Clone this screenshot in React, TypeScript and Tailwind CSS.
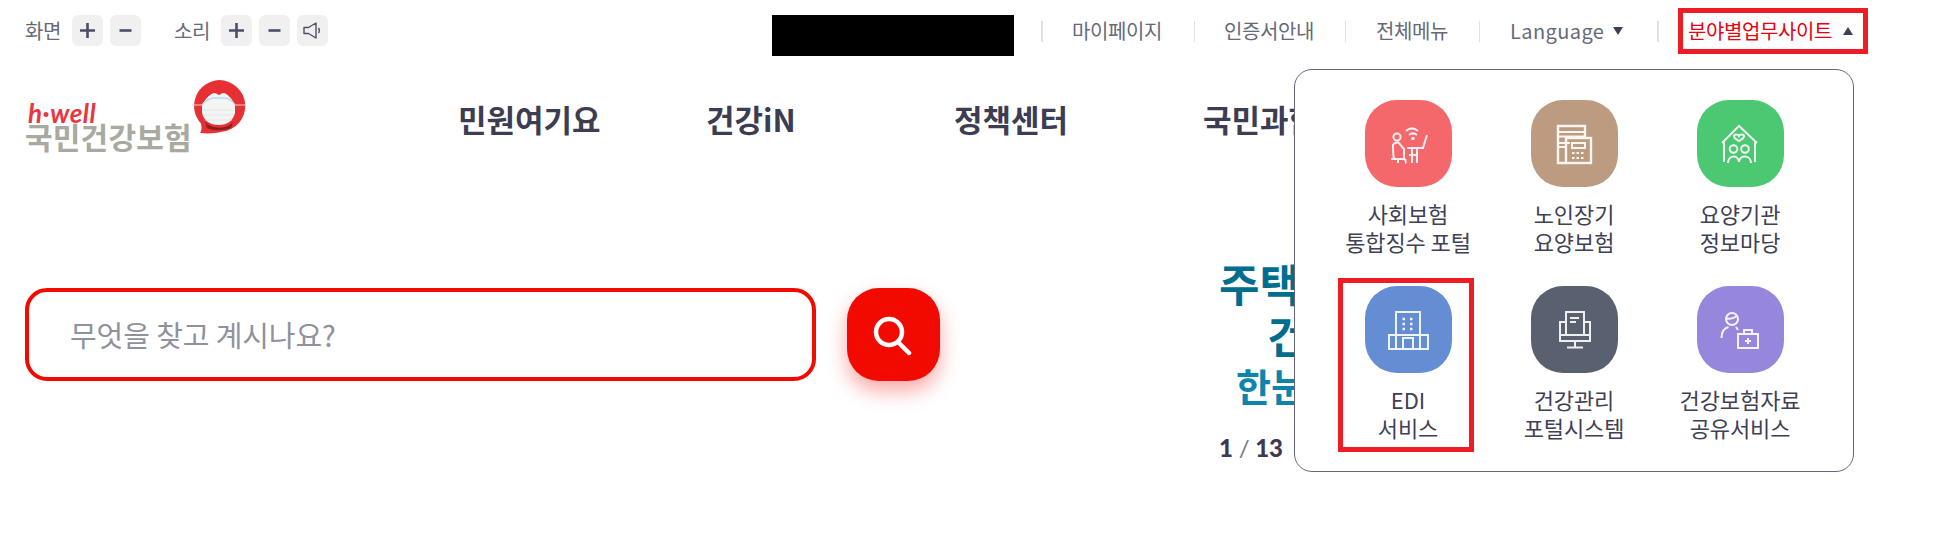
import React from 'react';

const FONT = "font-['Noto_Sans_CJK_KR','Noto_Sans',sans-serif]";

const SmallButton: React.FC<{ children: React.ReactNode }> = ({ children }) => (
  <button className="flex h-[31px] w-[31px] items-center justify-center rounded-md bg-[#f0f0f0]">
    {children}
  </button>
);

const Plus = () => (
  <svg width="17" height="17" viewBox="0 0 17 17" fill="none" stroke="#4b4f67" strokeWidth="2.6">
    <path d="M8.5 1v15M1 8.5h15" />
  </svg>
);

const Minus = () => (
  <svg width="13" height="13" viewBox="0 0 13 13" fill="none" stroke="#4b4f67" strokeWidth="2.6">
    <path d="M0.5 6.5h12" />
  </svg>
);

const Speaker = () => (
  <svg width="19" height="17" viewBox="0 0 19 17" fill="none" stroke="#4b4f67" strokeWidth="1.4" strokeLinejoin="round">
    <path d="M1 5.5h4.5L13 1v15l-7.500-4.500H1z" />
    <path d="M15.500 6c1 1.500 1 3.500 0 5" />
  </svg>
);

// 메뉴 아이콘: 타일 87x87 기준 좌표
const tiles: { label: string[]; color: string; icon: React.ReactNode; marked?: boolean }[] = [
  {
    label: ['사회보험', '통합징수 포털'],
    color: 'bg-[#f4676b]',
    icon: (
      <>
        <circle cx="32" cy="37" r="3.600" />
        <path d="M41 31c4-3.500 8-3.500 12 0M44 35c2.500-2 5.500-2 8 0" />
        <circle cx="48" cy="38.500" r="0.800" />
        <path d="M62 35l-4 13H42M47 48v15M52 48v15M52 55h-8" />
        <path d="M28 44c0 6 0 11 1 15h-3M26 59h13c2 0 2 4 1 4M33 42l6 7v10M28 44l5-2M33 59v4" />
      </>
    ),
  },
  {
    label: ['노인장기', '요양보험'],
    color: 'bg-[#bd9b80]',
    icon: (
      <>
        <path d="M35 63h-8V26h27v12" strokeWidth="2.400" />
        <path d="M27 32h27M27 36.500h27M27 43h12M27 47h8" />
        <rect x="35" y="38" width="25" height="25" strokeWidth="2.400" />
        <rect x="41" y="43" width="13" height="5" />
        <path d="M41 53h13M41 58h13" strokeDasharray="2.500 2" />
      </>
    ),
  },
  {
    label: ['요양기관', '정보마당'],
    color: 'bg-[#4cc873]',
    icon: (
      <>
        <path d="M25 43l17-17 18 17M27 41v21M58 41v21" />
        <path d="M42 36c-1-2-5-2-5 0.500 0 2 3 3 5 4.500 2-1.500 5-2.500 5-4.500 0-2.500-4-2.500-5-0.500z" />
        <circle cx="36.500" cy="49" r="3.800" />
        <circle cx="48" cy="49" r="3.800" />
        <path d="M31 63c0-8 10-9 11-1 1-8 12-7 12 1" />
      </>
    ),
  },
  {
    label: ['EDI', '서비스'],
    color: 'bg-[#658dd3]',
    marked: true,
    icon: (
      <>
        <path d="M31 49V26h24v23" />
        <path d="M24 49h39v14H24zM38 63V52h10v11M31 49v14M55 49v14" />
        <path d="M37.500 33h2.500M45 33h2.500M37.500 38h2.500M45 38h2.500M37.500 43h2.500M45 43h2.500" strokeWidth="2.400" />
      </>
    ),
  },
  {
    label: ['건강관리', '포털시스템'],
    color: 'bg-[#596170]',
    icon: (
      <>
        <path d="M35 49V26h18v23" />
        <path d="M39 32h9M39 36h6" />
        <path d="M35 36h-6v19h30V36h-6M29 49h30M44 55v6M36 61.500h16" />
      </>
    ),
  },
  {
    label: ['건강보험자료', '공유서비스'],
    color: 'bg-[#9686dc]',
    icon: (
      <>
        <circle cx="35" cy="33" r="6" />
        <path d="M29 32c4 2 8 0 11-2M24.500 52c0-6 3-10 7-11M39 41l2 3" />
        <rect x="41" y="48" width="20" height="14" />
        <path d="M47 48v-4h8v4M51 52v6M48 55h6" />
      </>
    ),
  },
];

const TileIcon: React.FC<{ color: string; children: React.ReactNode }> = ({ color, children }) => (
  <div className={`h-[87px] w-[87px] rounded-[32px] ${color}`}>
    <svg width="87" height="87" viewBox="0 0 87 87" fill="none" stroke="#ffffff" strokeWidth="2" opacity="0.9">
      {children}
    </svg>
  </div>
);

const Logo = () => (
  <div className="flex w-[221px] shrink-0 items-start">
    <div className="flex w-[167px] shrink-0 flex-col pt-[22px]">
      <span className="pl-[3px] font-['Lato',sans-serif] text-[26px] leading-[22px] font-bold italic tracking-[0.5px] text-[#e9353f]">
        h·well
      </span>
      <span className="-mt-[1px] text-[30px] leading-[27px] font-bold tracking-[0.2px] whitespace-nowrap text-[#a8a9a0]">
        국민건강보험
      </span>
    </div>
    <svg width="54" height="56" viewBox="0 0 54 56" className="shrink-0">
      <path d="M27 0a26.500 26 0 0 1 3 51.800c-7 1.500-14 2-22 1.200 1.500-2 2-5 1-9.500A26.500 26 0 0 1 27 0z" fill="#e63034" />
      <path d="M13 42c6 7 22 8 28 0l-2 6c-8 3-18 3-24 0z" fill="#8f1c1f" />
      <path d="M10 25C14 18 18 14 22 13c3 0 4 2 5 2s2-2 5-2c4 1 8 6 11 12v8c-2 8-8 12-16 12-9 0-15-4-17-12z" fill="#f3f4f4" />
      <path d="M10 25c4-5 8-7 12-7h10c4 0 8 2 11 7" fill="none" stroke="#b9dcee" strokeWidth="1.300" />
      <path d="M0 25h10M43 25h10" stroke="#f3d3d3" strokeWidth="1" />
      <path d="M11 30h31M11 35h31M13 40h27" stroke="#dfe2e2" strokeWidth="0.800" />
    </svg>
  </div>
);

const App: React.FC = () => {
  return (
    <div className={`relative h-[537px] w-[1935px] overflow-hidden bg-white ${FONT}`}>
      {/* 상단 유틸 바 */}
      <div className="flex h-[62px] items-center pl-[25px] text-[20px] tracking-[-0.4px] text-[#666a78]">
        <span className="mr-[12px] -mt-[1px] w-[35px] shrink-0 whitespace-nowrap">화면</span>
        <div className="-mt-[1px] flex gap-[7px]">
          <SmallButton><Plus /></SmallButton>
          <SmallButton><Minus /></SmallButton>
        </div>
        <span className="ml-[33px] mr-[12px] -mt-[1px] w-[35px] shrink-0 whitespace-nowrap">소리</span>
        <div className="-mt-[1px] flex gap-[7px]">
          <SmallButton><Plus /></SmallButton>
          <SmallButton><Minus /></SmallButton>
          <SmallButton><Speaker /></SmallButton>
        </div>
        <div className="ml-[444px] mt-[9px] h-[41px] w-[242px] shrink-0 bg-black" />
        <div className="ml-[27px] flex items-center">
          <span className="h-[21px] w-[2px] shrink-0 bg-[#e2e2e2]" />
          <span className="ml-[29px] w-[88px] shrink-0 whitespace-nowrap">마이페이지</span>
          <span className="ml-[34px] h-[21px] w-[1px] shrink-0 bg-[#e2e2e2]" />
          <span className="ml-[29px] w-[89px] shrink-0 whitespace-nowrap">인증서안내</span>
          <span className="ml-[32px] h-[21px] w-[1px] shrink-0 bg-[#e2e2e2]" />
          <span className="ml-[30px] w-[71px] shrink-0 whitespace-nowrap">전체메뉴</span>
          <span className="ml-[32px] h-[21px] w-[1px] shrink-0 bg-[#e2e2e2]" />
          <span className="ml-[30px] w-[91px] shrink-0 tracking-[0.4px] whitespace-nowrap">Language</span>
          <span className="ml-[12px] h-0 w-0 shrink-0 border-x-[5px] border-t-[8px] border-x-transparent border-t-[#3d3f58]" />
          <span className="ml-[34px] h-[21px] w-[2px] shrink-0 bg-[#e2e2e2]" />
          <div className="ml-[19px] flex h-[46px] w-[190px] shrink-0 items-center border-[5px] border-[#ee1c25] pl-[5px] text-[#e60012]">
            <span className="w-[142px] shrink-0 whitespace-nowrap">분야별업무사이트</span>
            <span className="ml-[13px] h-0 w-0 shrink-0 border-x-[5px] border-b-[8px] border-x-transparent border-b-[#3d3f58]" />
          </div>
        </div>
      </div>

      {/* 로고 + 메인 메뉴 */}
      <div className="flex h-[104px] pl-[25px] pt-[18px]">
        <Logo />
        <nav className="ml-[212px] flex pt-[17px] text-[31px] leading-[44px] font-bold whitespace-nowrap text-[#3c3d52]">
          <span className="w-[248px]">민원여기요</span>
          <span className="w-[248px]">건강iN</span>
          <span className="w-[249px]">정책센터</span>
          <span>국민과함께</span>
        </nav>
      </div>

      {/* 검색 + 배너 */}
      <div className="flex pl-[25px] pt-[122px]">
        <div className="flex h-[93px] w-[791px] shrink-0 items-center rounded-[22px] border-[4px] border-[#f20a00] pl-[41px] text-[29px] font-normal tracking-[-0.1px] text-[#8f929c]">
          무엇을 찾고 계시나요?
        </div>
        <button className="ml-[31px] flex h-[93px] w-[93px] shrink-0 items-center justify-center rounded-[32px] bg-[#f20a00] shadow-[0_10px_20px_rgba(242,10,0,0.35)]">
          <svg width="42" height="42" viewBox="0 0 42 42" fill="none" stroke="#ffffff" strokeWidth="4.500" className="-ml-[3px]">
            <circle cx="18" cy="18" r="13" />
            <path d="M27 28l11 11" strokeLinecap="round" />
          </svg>
        </button>
        <div className="-mt-[31px] ml-[279px] flex flex-col whitespace-nowrap font-bold">
          <span className="text-[44px] leading-[52px] text-[#006d8f]">주택</span>
          <span className="ml-[48px] text-[44px] leading-[52px] text-[#006d8f]">건강</span>
          <span className="ml-[17px] text-[38px] leading-[48px] text-[#0f84ab]">한눈에</span>
          <span className="mt-[25px] font-['Lato',sans-serif] text-[24px] leading-[28px] font-black text-[#3d3a50]">
            1 <span className="font-normal text-[#77778a]">/</span> 13
          </span>
        </div>
      </div>

      {/* 분야별 업무사이트 드롭다운 */}
      <div className="absolute left-[1294px] top-[69px] h-[403px] w-[560px] rounded-[18px] border border-[#66667a] bg-white pl-[30px] pt-[30px]">
        <div className="grid grid-cols-[166px_166px_166px] grid-rows-[186px_186px]">
          {tiles.map((tile) => (
            <div key={tile.label[0]} className="relative flex flex-col items-center">
              <TileIcon color={tile.color}>{tile.icon}</TileIcon>
              <p className="mt-[12px] text-center text-[22px] leading-[28px] tracking-[-0.1px] whitespace-nowrap text-[#3f3f55]">
                {tile.label[0]}
                <br />
                {tile.label[1]}
              </p>
              {tile.marked && (
                <div className="absolute -top-[8px] left-[13px] h-[174px] w-[136px] border-[5px] border-[#ee1c25]" />
              )}
            </div>
          ))}
        </div>
      </div>
    </div>
  );
};

export default App;
